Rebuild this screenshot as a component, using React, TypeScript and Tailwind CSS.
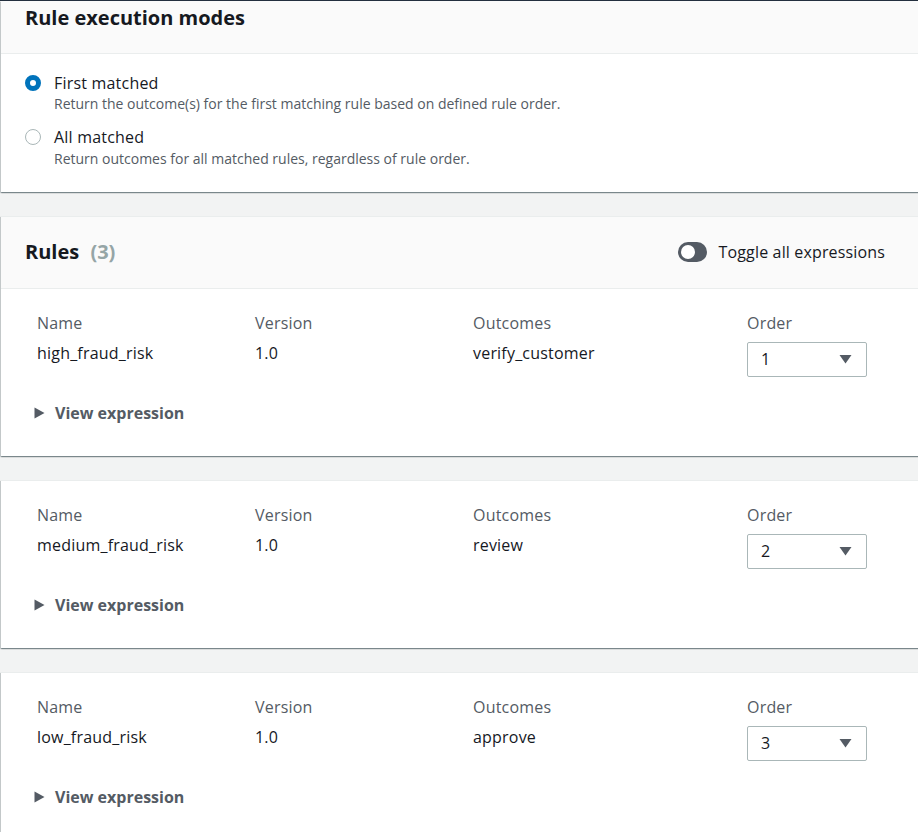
import React from "react";

const font = { fontFamily: '"Open Sans", "Noto Sans", Arial, sans-serif' };

function Radio({ checked }: { checked: boolean }) {
  return checked ? (
    <span className="mt-[3px] box-border block h-4 w-4 shrink-0 rounded-full border-[5px] border-[#0073bb] bg-white" />
  ) : (
    <span className="mt-[3px] box-border block h-4 w-4 shrink-0 rounded-full border-[1.5px] border-[#aab7b8] bg-white" />
  );
}

function Caret() {
  return (
    <svg width="13" height="10" viewBox="0 0 13 10" className="shrink-0">
      <path d="M0.5 1 L12.5 1 L6.5 9.5 Z" fill="#545b64" />
    </svg>
  );
}

function RuleBody({ name, outcome, order }: { name: string; outcome: string; order: number }) {
  return (
    <div className="pl-[36px] pt-[23px] pb-[32px]">
      <div className="grid grid-cols-[218px_218px_274px_120px] text-[16px] leading-[22px] tracking-[0.2px]">
        <div>
          <div className="text-[#545b64]">Name</div>
          <div className="mt-[8px] text-[#16191f]">{name}</div>
        </div>
        <div>
          <div className="text-[#545b64]">Version</div>
          <div className="mt-[8px] text-[#16191f]">1.0</div>
        </div>
        <div>
          <div className="text-[#545b64]">Outcomes</div>
          <div className="mt-[8px] text-[#16191f]">{outcome}</div>
        </div>
        <div>
          <div className="text-[#545b64]">Order</div>
          <div className="mt-[8px] flex h-[35px] w-[120px] items-center justify-between rounded-[2px] border border-[#aab7b8] bg-white pb-[1px] pl-[13px] pr-[14px]">
            <span className="text-[#16191f]">{order}</span>
            <Caret />
          </div>
        </div>
      </div>
      <div className="mt-[25px] flex h-[22px] items-center">
        <svg width="11" height="12" viewBox="0 0 11 12" className="ml-[-3px]">
          <path d="M0.5 0.5 L10.5 6 L0.5 11.5 Z" fill="#545b64" />
        </svg>
        <span className="ml-[10px] text-[16px] font-bold leading-[22px] text-[#545b64]">View expression</span>
      </div>
    </div>
  );
}

const cardShadow =
  "shadow-[0_1px_1px_0_rgba(0,28,36,0.3),1px_1px_1px_0_rgba(0,28,36,0.15),-1px_1px_1px_0_rgba(0,28,36,0.15)]";

export default function App() {
  return (
    <div style={font} className="min-h-[832px] w-[918px] overflow-hidden border-t border-[#232f3e] bg-[#f2f3f3]">
      {/* Rule execution modes */}
      <div className={`ml-[1px] w-[940px] bg-white ${cardShadow}`}>
        <div className="h-[53px] border-b border-[#eaeded] bg-[#fafafa] pl-[24px] pt-[4px]">
          <h2 className="text-[20px] font-bold leading-[26px] text-[#16191f]">Rule execution modes</h2>
        </div>
        <div className="pl-[24px] pt-[18px] pb-[23px]">
          <div className="flex gap-[13px]">
            <Radio checked />
            <div>
              <div className="text-[16px] leading-[22px] tracking-[0.2px] text-[#16191f]">First matched</div>
              <div className="text-[14px] leading-[20px] text-[#545b64]">
                Return the outcome(s) for the first matching rule based on defined rule order.
              </div>
            </div>
          </div>
          <div className="mt-[12px] flex gap-[13px]">
            <Radio checked={false} />
            <div>
              <div className="text-[16px] leading-[22px] tracking-[0.2px] text-[#16191f]">All matched</div>
              <div className="pt-[1px] text-[14px] leading-[20px] text-[#545b64]">
                Return outcomes for all matched rules, regardless of rule order.
              </div>
            </div>
          </div>
        </div>
      </div>

      {/* Rules */}
      <div className={`ml-[1px] mt-[24px] w-[940px] border-t border-[#eaeded] bg-white ${cardShadow}`}>
        <div className="flex h-[72px] w-[917px] items-center border-b border-[#eaeded] bg-[#fafafa] pb-[2px] pl-[24px] pr-[33px]">
          <h2 className="text-[20px] font-bold leading-[26px] text-[#16191f]">
            Rules <span className="ml-[6px] text-[#95a5a6]">(3)</span>
          </h2>
          <div className="ml-auto flex items-center gap-[12px]">
            <span className="relative block h-[20px] w-[29px] rounded-full bg-[#545b64]">
              <span className="absolute left-[3px] top-[3px] block h-[14px] w-[14px] rounded-full bg-white" />
            </span>
            <span className="text-[16px] leading-[22px] tracking-[0.15px] text-[#16191f]">Toggle all expressions</span>
          </div>
        </div>
        <RuleBody name="high_fraud_risk" outcome="verify_customer" order={1} />
      </div>

      <div className={`ml-[1px] mt-[24px] w-[940px] border-t border-[#eaeded] bg-white ${cardShadow}`}>
        <RuleBody name="medium_fraud_risk" outcome="review" order={2} />
      </div>

      <div className={`ml-[1px] mt-[24px] w-[940px] border-t border-[#eaeded] bg-white ${cardShadow}`}>
        <RuleBody name="low_fraud_risk" outcome="approve" order={3} />
      </div>
    </div>
  );
}
